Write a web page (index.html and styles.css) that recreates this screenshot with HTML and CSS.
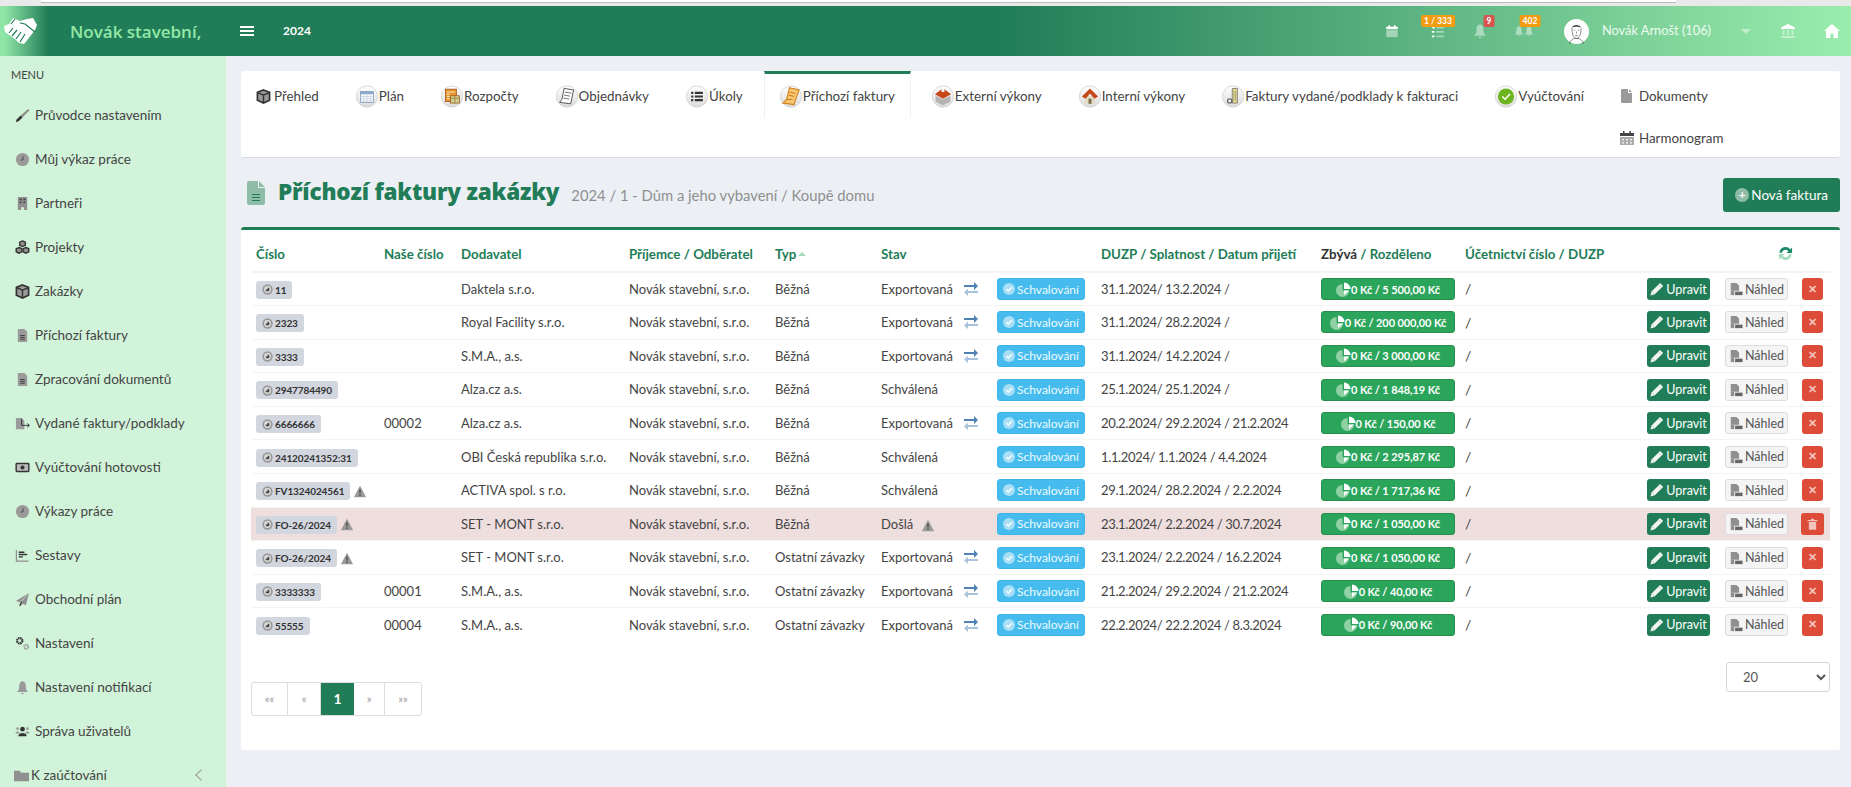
FILE: index.html
```html
<!DOCTYPE html>
<html lang="cs">
<head>
  <meta charset="UTF-8" />
  <title>Příchozí faktury zakázky</title>
  <link rel="stylesheet" href="styles.css">
</head>
<body>
  <svg class="sprites" aria-hidden="true">
    <defs>
      <linearGradient id="ball" x1="0" y1="0" x2="0" y2="1"><stop offset="0" stop-color="#fff"/><stop offset="1" stop-color="#dcdcdc"/></linearGradient>
      <symbol id="i-box" viewBox="0 0 16 16"><path d="M8 1 14.500 3.500V12L8 15 1.500 12V3.500Z" fill="#999" stroke="#333" stroke-width="1.800"/><path d="M2 4 8 6.500 14 4M8 6.500V14" fill="none" stroke="#333" stroke-width="1.500"/></symbol>
      <symbol id="i-pen" viewBox="0 0 16 16"><path d="M14 1 15.500 2.500 8 10 6 8Z" fill="#8f8f8f"/><path d="M6 8 8 10 3.500 14.500 1 15 1.500 12.500Z" fill="#333"/></symbol>
      <symbol id="i-clock" viewBox="0 0 16 16"><circle cx="8" cy="8" r="7" fill="#9a9a9a"/><path d="M8.500 4.500V8.500H6.500" fill="none" stroke="#444" stroke-width="1"/></symbol>
      <symbol id="i-building" viewBox="0 0 16 16"><path d="M3 1H13V15H9.500V12H6.500V15H3Z" fill="#8f8f8f"/><path d="M5 3H7V4.500H5ZM9 3H11V4.500H9ZM5 6H7V7.500H5ZM9 6H11V7.500H9Z" fill="#333"/></symbol>
      <symbol id="i-cubes" viewBox="0 0 16 16"><g fill="#8f8f8f" stroke="#333" stroke-width="1.500"><path d="M8 1 11 2.300V5.700L8 7 5 5.700V2.300Z"/><path d="M4.300 8 7.300 9.300V12.700L4.300 14 1.300 12.700V9.300Z"/><path d="M11.700 8 14.700 9.300V12.700L11.700 14 8.700 12.700V9.300Z"/></g></symbol>
      <symbol id="i-doc" viewBox="0 0 16 16"><path d="M3 1H10L13 4V15H3Z" fill="#9a9a9a"/><path d="M5.500 8H10.500M5.500 10H10.500M5.500 12H10.500" stroke="#333" stroke-width=".9"/></symbol>
      <symbol id="i-file" viewBox="0 0 11 14"><path d="M1 0H7V4H11V13A1 1 0 0 1 10 14H1A1 1 0 0 1 0 13V1A1 1 0 0 1 1 0ZM8 0 11 3H8Z" fill="#9a9a9a"/></symbol>
      <symbol id="i-page" viewBox="0 0 18 24"><path d="M2 0H11V7H18V22A2 2 0 0 1 16 24H2A2 2 0 0 1 0 22V2A2 2 0 0 1 2 0ZM12 0 18 6H12Z" fill="#8fbca6"/><path d="M5 13.500H13M5 16.500H13M5 19.500H13" stroke="#217d57" stroke-width="1"/></symbol>
      <symbol id="i-doc-out" viewBox="0 0 16 16"><path d="M1 2H7L10 5V14H1Z" fill="#9a9a9a"/><path d="M7 3V10H15M13 8 15.500 10 13 12" fill="none" stroke="#333" stroke-width="1"/></symbol>
      <symbol id="i-money" viewBox="0 0 16 16"><rect x="0.500" y="3" width="15" height="10" rx="1.500" fill="#333"/><rect x="2" y="4.500" width="12" height="7" fill="#bbb"/><circle cx="8" cy="8" r="2.200" fill="#333"/></symbol>
      <symbol id="i-chart" viewBox="0 0 16 16"><path d="M1.500 2V14H14.500" fill="none" stroke="#8f8f8f" stroke-width="1.300"/><path d="M4 4.500H10M4 7H13M4 9.500H8.500" stroke="#333" stroke-width="1.500"/></symbol>
      <symbol id="i-plane" viewBox="0 0 16 16"><path d="M15 1 1 9.500 5 11Z" fill="#8f8f8f"/><path d="M15 1 6 11.500 6 15 8.500 12.500 11.500 14Z" fill="#8f8f8f"/><path d="M7 10 5 15" stroke="#333" stroke-width="1.200"/></symbol>
      <symbol id="i-cogs" viewBox="0 0 16 16"><circle cx="5" cy="5" r="2.800" fill="none" stroke="#333" stroke-width="2.400" stroke-dasharray="1.600 .6"/><circle cx="12" cy="11.500" r="2.200" fill="none" stroke="#999" stroke-width="2" stroke-dasharray="1.400 .6"/></symbol>
      <symbol id="i-bell" viewBox="0 0 16 18"><path d="M8 1.500C5 1.500 4 4 4 8 4 11 3 13 1 14.500H15C13 13 12 11 12 8 12 4 11 1.500 8 1.500Z" fill="currentColor"/><path d="M6 15.500H10L8 17.500Z" fill="currentColor"/></symbol>
      <symbol id="i-users" viewBox="0 0 16 16"><circle cx="2.800" cy="5" r="1.500" fill="#999"/><circle cx="13.200" cy="5" r="1.500" fill="#999"/><path d="M.5 10C.5 7.500 5 7.500 5 10ZM11 10C11 7.500 15.500 7.500 15.500 10Z" fill="#999"/><circle cx="8" cy="5.500" r="2.500" fill="#333"/><path d="M3.500 13C3.500 8.500 12.500 8.500 12.500 13Z" fill="#333"/></symbol>
      <symbol id="i-folder" viewBox="0 0 16 16"><path d="M0 3H6L7.500 5H16V14H0Z" fill="#8f8f8f"/></symbol>
      <symbol id="i-pie" viewBox="0 0 16 16"><path d="M7 2A7 7 0 1 0 14 9H7Z" fill="#8fd0a5"/><path d="M8.500 .5A7 7 0 0 1 15.500 7.500H8.500Z" fill="#fff"/><path d="M8.500 9H14L8.500 14Z" fill="#fff"/></symbol>
      <symbol id="i-eye" viewBox="0 0 16 16"><circle cx="8" cy="8" r="7.500" fill="#999"/><circle cx="8" cy="8" r="5" fill="#ddd"/><path d="M8 5A3 3 0 1 1 5 8H8Z" fill="#444"/></symbol>
      <symbol id="i-warn" viewBox="0 0 16 16"><path d="M8 1 15.500 15H.5Z" fill="#999"/><path d="M7.200 5.500H8.800L8.500 10.800H7.500ZM7.200 11.800H8.800V13.300H7.200Z" fill="#333"/></symbol>
      <symbol id="i-swap" viewBox="0 0 14 14"><path d="M0 3H10V0L14 4 10 8V5H0Z" fill="#4f82b4"/><path d="M14 9H4V6.500L0 10.500 4 14V11H14Z" fill="#a9c3dc"/></symbol>
      <symbol id="i-pencil" viewBox="0 0 16 16"><path d="M11.500 1 15 4.500 5.500 14 .5 15.500 2 10.500Z" fill="#f4f4f4"/><path d="M9.800 3.200 12.800 6.200M2.800 10.800 5.200 13.200" stroke="#a9cfbd" stroke-width=".9"/></symbol>
      <symbol id="i-pdf" viewBox="0 0 16 16"><path d="M2 1H8.500L11.500 4V10H2Z" fill="#8f8f8f"/><path d="M2 10H6V15H2Z" fill="#8f8f8f"/><path d="M7 11H15.500V15H7Z" fill="#666"/></symbol>
      <symbol id="i-trash" viewBox="0 0 16 16"><path d="M2 3H14V4.500H2ZM6 1.500H10V3H6ZM3.500 5.500H12.500V15H3.500Z" fill="#f4c4bc"/></symbol>
      <symbol id="i-tick" viewBox="0 0 12 12"><circle cx="6" cy="6" r="6" fill="#a8dff6"/><path d="M3.300 6 5.300 8 8.800 4.300" fill="none" stroke="#fff" stroke-width="1.300"/></symbol>
      <symbol id="i-cal" viewBox="0 0 16 16"><path d="M1.500 3H14.500V6H1.500Z" fill="#fff"/><path d="M1.500 7H14.500V15H1.500Z" fill="currentColor"/><path d="M4 1H5.500V4H4ZM10.500 1H12V4H10.500Z" fill="#fff"/></symbol>
      <symbol id="i-sched" viewBox="0 0 14 14"><path d="M0 2H14V5H0Z" fill="#444"/><path d="M3 0H4.500V3H3ZM9.500 0H11V3H9.500Z" fill="#444"/><path d="M0 6H14V14H0Z" fill="#aaa"/><path d="M2 8H4V9.500H2ZM6 8H8V9.500H6ZM10 8H12V9.500H10ZM2 11H4V12.500H2ZM6 11H8V12.500H6ZM10 11H12V12.500H10Z" fill="#eee"/></symbol>
      <symbol id="i-tasks" viewBox="0 0 16 16"><path d="M1 3 3 5 5 2" fill="none" stroke="#fff" stroke-width="1.300"/><path d="M1 8H4V10H1ZM1 13H4V15H1Z" fill="#fff"/><path d="M6 3H15V5H6ZM6 8H15V10H6ZM6 13H15V15H6Z" fill="currentColor"/></symbol>
      <symbol id="i-bank" viewBox="0 0 16 16"><path d="M8 1 15 4.500V6H1V4.500Z" fill="#fff"/><path d="M2.500 7H4.500V12H2.500ZM7 7H9V12H7ZM11.500 7H13.500V12H11.500ZM1 13H15V15H1Z" fill="currentColor"/></symbol>
      <symbol id="i-home" viewBox="0 0 16 16"><path d="M8 1 16 8H14V15H9.500V10.500H6.500V15H2V8H0Z" fill="#fff"/></symbol>
      <symbol id="i-shake" viewBox="0 0 34 28"><path d="M9 1 16 4 23 2 29 1 33 8 31 13 24 22 20 27 15 26 11 22 5 18 1 15 0 9 5 7Z" fill="#fff"/><path d="M11 2 7 7M16 6 21 7 31 15M9 11 5 16M13 13 8 19M17 15 12 22M21 17 16 25" stroke="#217d57" stroke-width="1.200" fill="none"/></symbol>
      <symbol id="i-refresh" viewBox="0 0 16 16"><path d="M1.500 7A6.500 6.500 0 0 1 13 3.500L15 1.500V7.500H9L11 5.500A4 4 0 0 0 4 7.500Z" fill="#1f8a6a"/><path d="M14.500 9A6.500 6.500 0 0 1 3 12.500L1 14.500V8.500H7L5 10.500A4 4 0 0 0 12 8.500Z" fill="#a5dcc0"/></symbol>
      <symbol id="b-calendar" viewBox="0 0 30 30"><circle cx="15" cy="15" r="14.500" fill="url(#ball)" stroke="#ccc"/><rect x="6" y="8" width="18" height="15" fill="#fff" stroke="#6f8fb8"/><path d="M6 8H24V12H6Z" fill="#8fa9cb"/><path d="M6 15H24M6 18H24M6 21H24M10.500 12V23M15 12V23M19.500 12V23" stroke="#b5c5da" stroke-width=".8"/></symbol>
      <symbol id="b-budget" viewBox="0 0 30 30"><circle cx="15" cy="15" r="14.500" fill="url(#ball)" stroke="#ccc"/><rect x="6" y="5" width="15" height="17" fill="#e8962c" stroke="#9c4f12"/><path d="M8 9H19M8 12H12M8 15H12M8 18H12" stroke="#fff"/><rect x="13" y="14" width="12" height="10" fill="#c9d08c" stroke="#9c4f12"/><path d="M13 17.500H25M19 14V24" stroke="#9c4f12" stroke-width=".7"/></symbol>
      <symbol id="b-receipt" viewBox="0 0 30 30"><circle cx="15" cy="15" r="14.500" fill="url(#ball)" stroke="#ccc"/><path d="M11 4 24 6 20 25 5 23 8 19Z" fill="#fff" stroke="#444" stroke-width="1.200"/><path d="M12 9 21 10.500M11 13 19 14.500M10 17 18 18.500" stroke="#444"/></symbol>
      <symbol id="b-list" viewBox="0 0 30 30"><circle cx="15" cy="15" r="14.500" fill="url(#ball)" stroke="#ccc"/><path d="M7 8.500H10V11.500H7ZM12 8.500H23V11.500H12ZM7 13.500H10V16.500H7ZM12 13.500H23V16.500H12ZM7 18.500H10V21.500H7ZM12 18.500H23V21.500H12Z" fill="#333"/></symbol>
      <symbol id="b-invoice" viewBox="0 0 30 30"><circle cx="15" cy="15" r="14.500" fill="url(#ball)" stroke="#ccc"/><path d="M13 3 26 6 19 26 4 24 9 19Z" fill="#f7c873" stroke="#d07c12" stroke-width="1.400"/><path d="M13 9 21 11M12 13 19 15M9 19H17" stroke="#d07c12" stroke-width="1.400"/></symbol>
      <symbol id="b-ext" viewBox="0 0 30 30"><circle cx="15" cy="15" r="14.500" fill="url(#ball)" stroke="#ccc"/><path d="M5 14 15 19 25 14 25 22 15 27 5 22Z" fill="#b3b3b3"/><path d="M4 12 13 5V9H17V5L26 12 15 18Z" fill="#c8481c"/></symbol>
      <symbol id="b-int" viewBox="0 0 30 30"><circle cx="15" cy="15" r="14.500" fill="url(#ball)" stroke="#ccc"/><path d="M8 14H22V25H8Z" fill="#e3ddc8"/><path d="M4 15 15 4 26 15 21 18 15 11 9 18Z" fill="#c8481c"/><path d="M13 18H17V25H13Z" fill="#7d6a48"/></symbol>
      <symbol id="b-doc" viewBox="0 0 30 30"><circle cx="15" cy="15" r="14.500" fill="url(#ball)" stroke="#ccc"/><path d="M14 4H21V24H14Z" fill="#e8dc8c" stroke="#666"/><path d="M16.300 7V21M18.600 7V21" stroke="#777" stroke-width=".7"/><circle cx="10.500" cy="21" r="3" fill="none" stroke="#555" stroke-width="1.400"/></symbol>
      <symbol id="b-ok" viewBox="0 0 30 30"><circle cx="15" cy="15" r="14.500" fill="url(#ball)" stroke="#ccc"/><circle cx="15" cy="15" r="11" fill="#6cb51f"/><path d="M10 15 13.700 18.700 20.500 11.500" fill="none" stroke="#fff" stroke-width="2"/></symbol>
      <symbol id="i-face" viewBox="0 0 36 36"><circle cx="18" cy="18" r="18" fill="#fff"/><path d="M11 15C10 7 26 7 25 15L24 12C20 10.500 16 10.500 12 12Z" fill="#1c1c1c"/><path d="M11.500 14C11.500 26 16 28 18 28 20 28 24.500 26 24.500 14" fill="none" stroke="#333" stroke-width=".8"/><path d="M14 16H16M20 16H22M18 18V21M16 24H20" stroke="#333" stroke-width=".8"/><path d="M8 36C9 30 13 29 15 28H21C23 29 27 30 28 36" fill="none" stroke="#333" stroke-width=".8"/></symbol>
    </defs>
  </svg>

  <div class="chrome"><div class="chrome-bar"></div></div>

  <header class="topbar">
    <div class="logo"><svg class="logo-mark"><use href="#i-shake"/></svg></div>
    <div class="brand">Novák stavební,</div>
    <div class="burger"><span></span><span></span><span></span></div>
    <div class="year">2024</div>
    <div class="topbar-right">
      <span class="tb-item tb-cal"><svg class="tb-icon"><use href="#i-cal"/></svg></span>
      <span class="tb-item tb-tasks"><svg class="tb-icon"><use href="#i-tasks"/></svg><b class="tb-badge orange">1 / 333</b></span>
      <span class="tb-item tb-bell"><svg class="tb-icon"><use href="#i-bell"/></svg><b class="tb-badge red">9</b></span>
      <span class="tb-item tb-bells"><svg class="tb-icon wide"><use href="#i-bell"/></svg><svg class="tb-icon wide"><use href="#i-bell"/></svg><b class="tb-badge orange">402</b></span>
      <svg class="avatar"><use href="#i-face"/></svg>
      <span class="user">Novák Arnošt (106)</span>
      <span class="caret"></span>
      <span class="tb-item tb-bank"><svg class="tb-icon"><use href="#i-bank"/></svg></span>
      <span class="tb-item tb-home"><svg class="tb-icon"><use href="#i-home"/></svg></span>
    </div>
  </header>

  <div class="layout">
    <aside class="sidebar">
      <div class="menu-label">MENU</div>
      <ul class="menu">
        <li><svg class="mi"><use href="#i-pen"/></svg>Průvodce nastavením</li>
        <li><svg class="mi"><use href="#i-clock"/></svg>Můj výkaz práce</li>
        <li><svg class="mi"><use href="#i-building"/></svg>Partneři</li>
        <li><svg class="mi"><use href="#i-cubes"/></svg>Projekty</li>
        <li><svg class="mi"><use href="#i-box"/></svg>Zakázky</li>
        <li><svg class="mi"><use href="#i-doc"/></svg>Příchozí faktury</li>
        <li><svg class="mi"><use href="#i-doc"/></svg>Zpracování dokumentů</li>
        <li><svg class="mi"><use href="#i-doc-out"/></svg>Vydané faktury/podklady</li>
        <li><svg class="mi"><use href="#i-money"/></svg>Vyúčtování hotovosti</li>
        <li><svg class="mi"><use href="#i-clock"/></svg>Výkazy práce</li>
        <li><svg class="mi"><use href="#i-chart"/></svg>Sestavy</li>
        <li><svg class="mi"><use href="#i-plane"/></svg>Obchodní plán</li>
        <li><svg class="mi"><use href="#i-cogs"/></svg>Nastavení</li>
        <li><svg class="mi bell"><use href="#i-bell"/></svg>Nastavení notifikací</li>
        <li><svg class="mi"><use href="#i-users"/></svg>Správa uživatelů</li>
        <li class="folder"><svg class="mi"><use href="#i-folder"/></svg>K zaúčtování<span class="chev"></span></li>
      </ul>
    </aside>

    <main class="content">
      <nav class="tabs">
        <a class="tab first"><svg class="fa"><use href="#i-box"/></svg>Přehled</a>
        <a class="tab"><svg class="ball"><use href="#b-calendar"/></svg>Plán</a>
        <a class="tab"><svg class="ball"><use href="#b-budget"/></svg>Rozpočty</a>
        <a class="tab"><svg class="ball"><use href="#b-receipt"/></svg>Objednávky</a>
        <a class="tab"><svg class="ball"><use href="#b-list"/></svg>Úkoly</a>
        <a class="tab active"><svg class="ball"><use href="#b-invoice"/></svg>Příchozí faktury</a>
        <a class="tab"><svg class="ball"><use href="#b-ext"/></svg>Externí výkony</a>
        <a class="tab"><svg class="ball"><use href="#b-int"/></svg>Interní výkony</a>
        <a class="tab"><svg class="ball"><use href="#b-doc"/></svg>Faktury vydané/podklady k fakturaci</a>
        <a class="tab"><svg class="ball"><use href="#b-ok"/></svg>Vyúčtování</a>
        <a class="tab short"><svg class="fa file"><use href="#i-file"/></svg>Dokumenty</a>
        <a class="tab short"><svg class="fa sched"><use href="#i-sched"/></svg>Harmonogram</a>
      </nav>

      <div class="page-head">
        <svg class="page-icon"><use href="#i-page"/></svg>
        <h1>Příchozí faktury zakázky</h1>
        <small>2024 / 1 - Dům a jeho vybavení / Koupě domu</small>
        <button class="btn-new"><span class="plus">+</span>Nová faktura</button>
      </div>

      <section class="box">
        <table class="grid">
          <colgroup>
            <col class="c1"><col class="c2"><col class="c3"><col class="c4"><col class="c5"><col class="c6"><col class="c7"><col class="c8"><col class="c9"><col class="c10"><col class="c11"><col class="c12"><col class="c13">
          </colgroup>
          <thead>
            <tr>
              <th>Číslo</th><th>Naše číslo</th><th>Dodavatel</th><th>Příjemce / Odběratel</th>
              <th>Typ<span class="sort"></span></th><th>Stav</th><th></th>
              <th>DUZP / Splatnost / Datum přijetí</th>
              <th><span class="dark-th">Zbývá</span> / Rozděleno</th>
              <th>Účetnictví číslo / DUZP</th><th></th>
              <th class="refresh-cell" colspan="2"><svg class="refresh"><use href="#i-refresh"/></svg></th>
            </tr>
          </thead>
          <tbody id="rows"></tbody>
        </table>

        <div class="box-foot">
          <ul class="pager">
            <li>««</li><li>«</li><li class="on">1</li><li>»</li><li>»»</li>
          </ul>
          <select class="per-page"><option>20</option></select>
        </div>
      </section>
    </main>
  </div>

  <script>
    // číslo, warn, naše číslo, dodavatel, typ, stav, swap, data, částka
    const ROWS = [
      ['11', 0, '', 'Daktela s.r.o.', 'Běžná', 'Exportovaná', 1, '31.1.2024/ 13.2.2024 /', '0 Kč / 5 500,00 Kč'],
      ['2323', 0, '', 'Royal Facility s.r.o.', 'Běžná', 'Exportovaná', 1, '31.1.2024/ 28.2.2024 /', '0 Kč / 200 000,00 Kč'],
      ['3333', 0, '', 'S.M.A., a.s.', 'Běžná', 'Exportovaná', 1, '31.1.2024/ 14.2.2024 /', '0 Kč / 3 000,00 Kč'],
      ['2947784490', 0, '', 'Alza.cz a.s.', 'Běžná', 'Schválená', 0, '25.1.2024/ 25.1.2024 /', '0 Kč / 1 848,19 Kč'],
      ['6666666', 0, '00002', 'Alza.cz a.s.', 'Běžná', 'Exportovaná', 1, '20.2.2024/ 29.2.2024 / 21.2.2024', '0 Kč / 150,00 Kč'],
      ['24120241352:31', 0, '', 'OBI Česká republika s.r.o.', 'Běžná', 'Schválená', 0, '1.1.2024/ 1.1.2024 / 4.4.2024', '0 Kč / 2 295,87 Kč'],
      ['FV1324024561', 1, '', 'ACTIVA spol. s r.o.', 'Běžná', 'Schválená', 0, '29.1.2024/ 28.2.2024 / 2.2.2024', '0 Kč / 1 717,36 Kč'],
      ['FO-26/2024', 1, '', 'SET - MONT s.r.o.', 'Běžná', 'Došlá', 2, '23.1.2024/ 2.2.2024 / 30.7.2024', '0 Kč / 1 050,00 Kč', true],
      ['FO-26/2024', 1, '', 'SET - MONT s.r.o.', 'Ostatní závazky', 'Exportovaná', 1, '23.1.2024/ 2.2.2024 / 16.2.2024', '0 Kč / 1 050,00 Kč'],
      ['3333333', 0, '00001', 'S.M.A., a.s.', 'Ostatní závazky', 'Exportovaná', 1, '21.2.2024/ 29.2.2024 / 21.2.2024', '0 Kč / 40,00 Kč'],
      ['55555', 0, '00004', 'S.M.A., a.s.', 'Ostatní závazky', 'Exportovaná', 1, '22.2.2024/ 22.2.2024 / 8.3.2024', '0 Kč / 90,00 Kč']
    ];

    const icon = (name, cls) => `<svg class="${cls}"><use href="#${name}"/></svg>`;

    document.getElementById('rows').innerHTML = ROWS.map(r => `
      <tr class="${r[9] ? 'danger' : ''}">
        <td><span class="num">${icon('i-eye', 'eye')}${r[0]}</span>${r[1] ? icon('i-warn', 'warn') : ''}</td>
        <td>${r[2]}</td>
        <td>${r[3]}</td>
        <td>Novák stavební, s.r.o.</td>
        <td>${r[4]}</td>
        <td>${r[5]}${r[6] === 1 ? icon('i-swap', 'swap') : r[6] === 2 ? icon('i-warn', 'warn state-warn') : ''}</td>
        <td><button class="btn-appr">${icon('i-tick', 'tick')}Schvalování</button></td>
        <td class="dates">${r[7]}</td>
        <td><button class="btn-sum">${icon('i-pie', 'pie')}${r[8]}</button></td>
        <td class="slash">/</td>
        <td><button class="btn-edit">${icon('i-pencil', 'pen')}Upravit</button></td>
        <td><button class="btn-pdf">${icon('i-pdf', 'pdf')}Náhled</button></td>
        <td><button class="btn-del ${r[9] ? 'big' : ''}">${r[9] ? icon('i-trash', 'trash') : '✕'}</button></td>
      </tr>`).join('');
  </script>
</body>
</html>
```

FILE: styles.css
```css
:root {
  --green: #217d57;
  --mint: #d1f3d9;
  --page: #ecf0f5;
  --text: #444;
}
* { box-sizing: border-box; }
body {
  margin: 0;
  height: 787px;
  overflow: hidden;
  font: 13px/1.4 Lato, "Noto Sans", sans-serif;
  color: var(--text);
}
.sprites { width: 0; height: 0; display: block; }

/* ----- Browser strip + top bar ----- */
.chrome { height: 6px; background: #e9e9e9; }
.chrome-bar {
  width: 1635px;
  height: 2px;
  margin-left: 41px;
  background: #fff;
  border-bottom: 1px solid #bbb;
  box-sizing: content-box;
}
.topbar {
  height: 50px;
  display: flex;
  align-items: center;
  background: linear-gradient(90deg, var(--green) 54%, #9bedae 100%);
  color: #fff;
}
.logo {
  width: 48px;
  height: 50px;
  display: flex;
  align-items: center;
  padding-left: 4px;
  background: linear-gradient(90deg, #8fe5a6, #8fe5a6 10%, var(--green));
}
.logo-mark { width: 34px; height: 28px; }
.brand {
  width: 170px;
  padding-left: 22px;
  font: 600 17px "Open Sans", sans-serif;
  color: #93e8a8;
  white-space: nowrap;
}
.burger { width: 14px; margin-left: 22px; display: flex; flex-direction: column; gap: 2px; }
.burger span { height: 2px; background: #fff; }
.year { margin-left: 29px; font-size: 12px; font-weight: 700; }
.topbar-right { margin-left: auto; display: flex; align-items: center; color: #fff; }
.tb-item { position: relative; display: block; height: 20px; }
.tb-icon { width: 14px; height: 18px; margin-top: 1px; color: rgba(255,255,255,.45); display: block; }
.tb-cal { margin-right: 32px; }
.tb-tasks { margin-right: 28px; }
.tb-bell { margin-right: 27px; }
.tb-bells { display: flex; margin-right: 30px; }
.tb-icon.wide { width: 10px; }
.tb-badge {
  position: absolute;
  top: -6px;
  left: 50%;
  transform: translateX(-50%);
  padding: 1px 3px;
  border-radius: 2px;
  font-size: 8.500px;
  line-height: 10px;
  color: #fff;
  white-space: nowrap;
}
.tb-tasks .tb-badge { left: 7px; }
.tb-bell .tb-badge { left: 16px; }
.tb-bells .tb-badge { left: 16px; }
.orange { background: #f39c12; }
.red { background: #d9534f; }
.avatar { width: 25px; height: 25px; margin-right: 13px; }
.user { font-size: 12.800px; margin-right: 30px; color: #eefbf0; }
.caret {
  width: 0;
  height: 0;
  border: 5px solid transparent;
  border-top-color: rgba(255,255,255,.45);
  border-bottom: 0;
  margin-right: 29px;
}
.tb-bank { margin-right: 28px; }
.tb-bank .tb-icon, .tb-home .tb-icon { width: 16px; }
.tb-home { margin-right: 11px; }

/* ----- Layout ----- */
.layout { display: flex; height: 731px; }
.sidebar { width: 226px; flex: none; background: var(--mint); overflow: hidden; }
.menu-label { padding: 11px 11px 0; font-size: 11px; line-height: 15px; }
.menu { list-style: none; margin: 11px 0 0; padding: 0; }
.menu li {
  height: 44px;
  display: flex;
  align-items: center;
  padding-left: 15px;
  font-size: 13.500px;
}
.mi { width: 15px; height: 15px; margin-right: 5px; flex: none; }
.mi.bell { color: #9a9a9a; }
.menu li.folder { padding-left: 14px; }
.folder .mi { margin-right: 2px; }
.chev {
  margin-left: auto;
  margin-right: 21px;
  width: 8px;
  height: 8px;
  border-left: 1px solid #999;
  border-bottom: 1px solid #999;
  transform: rotate(45deg);
}
.content { flex: 1; background: var(--page); padding: 15px 11px 0 15px; min-width: 0; }

/* ----- Tabs (floats on purpose: Harmonogram drops in under Dokumenty) ----- */
.tabs {
  height: 87px;
  background: #fff;
  border-radius: 3px;
  border-bottom: 1px solid #d8dbe0;
}
.tab {
  float: left;
  display: flex;
  height: 47px;
  margin-right: 5px;
  padding: 14px 16px 0;
  font-size: 13.380px;
  line-height: 23px;
  color: #444;
}
.tab.first { padding-left: 15px; }
.tab.short { height: 42px; }
.ball { width: 22px; height: 23px; flex: none; margin-right: 1px; }
.fa { width: 15px; height: 15px; margin: 4px 3px 0 0; flex: none; }
.fa.file { width: 11px; height: 14px; margin-right: 7px; }
.fa.sched { width: 14px; height: 14px; margin-right: 5px; margin-left: -1px; }
.tab.active {
  padding: 11px 15px 0;
  border-top: 3px solid var(--green);
  border-left: 1px solid #f0f0f0;
  border-right: 1px solid #f0f0f0;
}

/* ----- Page head ----- */
.page-head { height: 69px; display: flex; align-items: center; padding-top: 4px; }
.page-icon { width: 18px; height: 24px; margin-left: 6px; margin-right: 13px; margin-bottom: 3px; flex: none; }
.page-head h1 {
  margin: 0 12px 7px 0;
  font: 800 22.500px "Open Sans", sans-serif;
  letter-spacing: -.2px;
  color: var(--green);
}
.page-head small { font-size: 14.800px; color: #8f8f8f; margin-top: 2px; }
.btn-new {
  margin-left: auto;
  height: 34px;
  padding: 0 12px;
  border: 0;
  border-radius: 3px;
  background: var(--green);
  color: #fff;
  font: 13.500px Lato, sans-serif;
  display: flex;
  align-items: center;
}
.plus {
  width: 14px;
  height: 14px;
  margin-right: 2px;
  border-radius: 50%;
  background: #8fbca6;
  font-weight: 700;
  line-height: 13px;
  font-size: 12px;
}

/* ----- Box + table ----- */
.box {
  height: 523px;
  background: #fff;
  border-top: 3px solid var(--green);
  border-radius: 3px;
  padding: 0 10px;
}
.grid { width: 100%; table-layout: fixed; border-collapse: collapse; }
.c1 { width: 128px; } .c2 { width: 77px; } .c3 { width: 168px; } .c4 { width: 146px; }
.c5 { width: 106px; } .c6 { width: 116px; } .c7 { width: 104px; } .c8 { width: 220px; }
.c9 { width: 144px; } .c10 { width: 182px; } .c11 { width: 78px; } .c12 { width: 77px; }
.c13 { width: 33px; }
.grid th {
  height: 42px;
  padding: 8px 5px 0;
  text-align: left;
  color: var(--green);
  font-size: 13.300px;
  font-weight: 700;
  border-bottom: 2px solid #f4f4f4;
  white-space: nowrap;
}
.grid td {
  height: 33.600px;
  padding: 0 5px;
  white-space: nowrap;
  border-top: 1px solid #f4f4f4;
  vertical-align: middle;
}
.grid tbody tr:first-child td { border-top: 0; }
.dark-th { color: #333; }
.sort {
  display: inline-block;
  margin-left: 2px;
  vertical-align: 3px;
  border: 4px solid transparent;
  border-bottom-color: #a5d9bc;
  border-top: 0;
}
.refresh-cell { padding-left: 58px !important; }
.refresh { width: 15px; height: 15px; vertical-align: -2px; }
.danger td { background: #efdede; }
.num {
  display: inline-flex;
  align-items: center;
  height: 18px;
  padding: 0 6px;
  border-radius: 3px;
  background: #d2d6de;
  color: #333;
  font-size: 10px;
  font-weight: 700;
  letter-spacing: -.1px;
  vertical-align: middle;
}
.eye { width: 11px; height: 11px; margin-right: 2px; flex: none; }
.warn { width: 14px; height: 13px; margin-left: 3px; vertical-align: middle; }
.warn.state-warn { margin-left: 8px; }
.swap { width: 14px; height: 14px; margin-left: 11px; vertical-align: -2px; }
.dates { letter-spacing: -.35px; }
button { cursor: pointer; }
.btn-appr {
  width: 88px;
  height: 22px;
  padding: 0;
  border: 1px solid #3bb5e8;
  border-radius: 3px;
  background: #46bcee;
  color: #eafaff;
  font: 12px Lato, sans-serif;
  display: flex;
  align-items: center;
  justify-content: center;
}
.tick { width: 12px; height: 12px; margin-right: 2px; flex: none; }
.btn-sum {
  width: 134px;
  height: 22px;
  padding: 0;
  border: 1px solid #27904f;
  border-radius: 3px;
  background: #2ca55c;
  color: #fff;
  font: 700 11px Lato, sans-serif;
  letter-spacing: -.1px;
  display: flex;
  align-items: center;
  justify-content: center;
}
.pie { width: 15px; height: 15px; flex: none; }
.slash { font-size: 14px; }
.btn-edit, .btn-pdf {
  width: 63px;
  height: 22px;
  padding: 0;
  border-radius: 3px;
  font: 12.500px Lato, sans-serif;
  display: flex;
  align-items: center;
  justify-content: center;
}
.btn-edit { border: 0; background: var(--green); color: #fff; }
.btn-pdf { border: 1px solid #ddd; background: #f4f4f4; color: #555; }
.pen, .pdf { width: 14px; height: 14px; margin-right: 2px; flex: none; }
.btn-del {
  width: 21px;
  height: 22px;
  padding: 0;
  border: 0;
  border-radius: 3px;
  background: #dd4b39;
  color: #f4c4bc;
  font-size: 11px;
  font-weight: 700;
  display: block;
}
.btn-del.big { width: 23px; margin-left: -1px; }
.trash { width: 13px; height: 14px; vertical-align: -2px; }

.box-foot { display: flex; justify-content: space-between; margin-top: 20px; }
.pager {
  list-style: none;
  margin: 20px 0 0;
  padding: 0;
  display: flex;
  height: 34px;
  border: 1px solid #ddd;
  border-radius: 3px;
}
.pager li {
  width: 33px;
  display: flex;
  align-items: center;
  justify-content: center;
  font-size: 11px;
  color: #999;
  border-right: 1px solid #ddd;
}
.pager li:first-child { width: 36px; }
.pager li:nth-child(4) { border-right: 0; width: 30px; }
.pager li:last-child { border-right: 0; width: 37px; border-left: 1px solid #ddd; }
.pager li.on { background: var(--green); color: #fff; font-size: 14px; font-weight: 700; border: 0; }
.per-page {
  width: 104px;
  height: 30px;
  padding-left: 12px;
  background: #fff;
  border: 1px solid #d2d6de;
  border-radius: 3px;
  font: 13px Lato, sans-serif;
  color: #555;
}
```
